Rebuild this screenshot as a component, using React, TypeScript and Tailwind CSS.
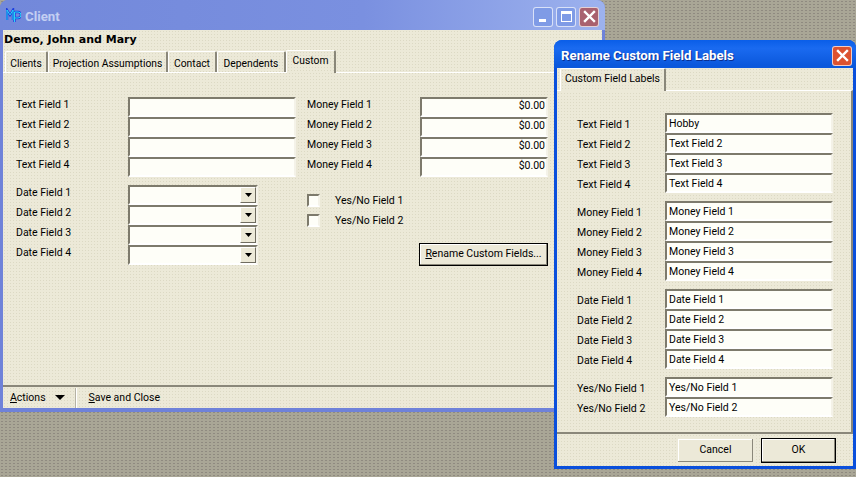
import React from "react";

const inset = "border-2 border-t-[#7d7a6c] border-l-[#7d7a6c] border-b-white border-r-[#f4f2e8] bg-[#fefef8]";
const panel = "bg-[#ece9d8] bg-[radial-gradient(#dcd9c4_0.7px,transparent_0.8px)] bg-[size:3px_3px]";

function Field({ value = "", right = false, w, up = "" }: { value?: string; right?: boolean; w: string; up?: string }) {
  return (
    <div className={`h-5 ${w} ${inset} flex items-center overflow-hidden whitespace-nowrap leading-none ${right ? "justify-end pr-[1px]" : "pl-[2px]"}`}>
      <span className={up}>{value}</span>
    </div>
  );
}

function Row({ label, labelW, shift, children }: { label: string; labelW: string; shift: string; children: React.ReactNode }) {
  return (
    <div className="flex h-5 items-center">
      <div className={`${labelW} shrink-0 whitespace-nowrap ${shift}`}>{label}</div>
      {children}
    </div>
  );
}

function DateBox() {
  return (
    <div className={`h-5 w-[130px] ${inset} flex justify-end`}>
      <div className="w-[16px] h-4 bg-[#ece9d8] border border-t-white border-l-white border-b-[#6f6c60] border-r-[#6f6c60] flex items-center justify-center">
        <svg width="7" height="4" viewBox="0 0 7 4"><path d="M0 0h7L3.500 4z" fill="#000" /></svg>
      </div>
    </div>
  );
}

function Tab({ label, active = false, w, text }: { label: string; active?: boolean; w: string; text: string }) {
  return (
    <div
      className={`${w} shrink-0 whitespace-nowrap flex items-center justify-center ${panel} border-t border-l border-t-white border-l-white border-r-2 border-r-[#8a877a] rounded-t-[2px] ${
        active ? "h-[23px] -mb-[1px] relative z-10" : "h-[21px]"
      }`}
    >
      <span className={`${text} ${active ? "-mt-[2px]" : "mt-[4px]"}`}>{label}</span>
    </div>
  );
}

function Mp() {
  return (
    <svg width="15" height="16" viewBox="0 0 15 16" className="mr-[4px] mt-[1px]">
      <path d="M1 12V2l3 5 3-5v10M8.500 14V4h3.500a2.500 2.500 0 0 1 0 6H8.500" fill="none" stroke="#1c3fe0" strokeWidth="2.400" />
      <path d="M1 12V2l3 5 3-5v10M8.500 14V4h3.500a2.500 2.500 0 0 1 0 6H8.500" fill="none" stroke="#27d7f5" strokeWidth="1" />
    </svg>
  );
}

function WinBtn({ children, cls }: { children: React.ReactNode; cls: string }) {
  return (
    <div className={`w-[20px] h-[20px] rounded-[3px] border border-white/70 flex items-center justify-center ${cls}`}>
      {children}
    </div>
  );
}

function XIcon() {
  return (
    <svg width="13" height="13" viewBox="0 0 13 13">
      <path d="M2 2l9 9M11 2l-9 9" stroke="#fff" strokeWidth="2.400" strokeLinecap="square" />
    </svg>
  );
}

const n4 = [1, 2, 3, 4];

function ClientWindow() {
  return (
    <div className="absolute left-0 top-0 w-[605px] h-[412px] flex flex-col rounded-t-[8px] bg-[#6f82d9] px-[3px] pb-[4px]">
      <div className="h-[30px] shrink-0 -mx-[3px] pl-[6px] pr-[6px] flex items-center rounded-t-[8px] bg-[linear-gradient(90deg,#7288da,#7a90e0_60%,#9db2ee)]">
        <Mp />
        <span className="text-[13.250px] font-bold text-[#c3cff2] mt-[3px]">Client</span>
        <div className="ml-auto flex gap-[3px] mt-[3px]">
          <WinBtn cls="bg-[#7f9be6]"><div className="w-[7px] h-[3px] bg-white mt-[8px] -ml-[2px]" /></WinBtn>
          <WinBtn cls="bg-[#7f9be6]"><div className="w-[11px] h-[11px] border border-white border-t-[3px]" /></WinBtn>
          <WinBtn cls="bg-[#a9616f]"><XIcon /></WinBtn>
        </div>
      </div>
      <div className={`flex-1 min-h-0 flex flex-col ${panel}`}>
        <div className="h-5 shrink-0 flex items-center pl-[1px] text-[11px] font-bold text-black [font-family:'DejaVu_Sans',sans-serif]">
          <span className="-mt-[2px]">Demo, John and Mary</span>
        </div>
        <div className="h-[22px] shrink-0 flex items-end pl-[2px]">
          <Tab label="Clients" w="w-[43px]" text="text-[10.300px]" />
          <Tab label="Projection Assumptions" w="w-[120px]" text="text-[10.300px]" />
          <Tab label="Contact" w="w-[49px]" text="text-[10.300px]" />
          <Tab label="Dependents" w="w-[69px]" text="text-[10.300px]" />
          <Tab label="Custom" w="w-[50px]" text="text-[10.300px]" active />
        </div>
        <div className="flex-1 min-h-0 border-t border-t-white flex pl-[13px] pt-[24px]">
          <div className="w-[293px] shrink-0">
            {n4.map((i) => (
              <Row key={i} label={`Text Field ${i}`} labelW="w-[112px]" shift="-mt-[3px]"><Field w="w-[168px]" /></Row>
            ))}
            <div className="h-2" />
            {n4.map((i) => (
              <Row key={i} label={`Date Field ${i}`} labelW="w-[112px]" shift="-mt-[3px]"><DateBox /></Row>
            ))}
          </div>
          <div className="w-[241px] shrink-0 -ml-[2px]">
            {n4.map((i) => (
              <Row key={i} label={`Money Field ${i}`} labelW="w-[113px]" shift="-mt-[3px]"><Field w="w-[128px]" value="$0.00" right up="-mt-[2px]" /></Row>
            ))}
            <div className="h-[13px]" />
            {[1, 2].map((i) => (
              <div key={i} className="flex h-5 items-center">
                <div className={`w-[13px] h-[13px] mr-[15px] ${inset}`} />
                <span className="mt-[2px] whitespace-nowrap">{`Yes/No Field ${i}`}</span>
              </div>
            ))}
            <div className="mt-[13px] ml-[112px] w-[129px] h-[23px] border border-black bg-[#ece9d8] shadow-[inset_-1px_-1px_0_#8a877a,inset_1px_1px_0_#fff] flex items-center justify-center whitespace-nowrap">
              <span className="-mt-[1px]"><u>R</u>ename Custom Fields...</span>
            </div>
          </div>
        </div>
        <div className="h-[23px] shrink-0 border-t-2 border-t-[#8a877a] flex items-center pl-[7px]">
          <span className="mt-[2px]"><u>A</u>ctions</span>
          <svg width="10" height="5" viewBox="0 0 10 5" className="ml-[9px] mr-[10px]"><path d="M0 0h10L5 5z" fill="#000" /></svg>
          <div className="w-[2px] h-[20px] border-l border-r border-l-[#b5b2a4] border-r-white mr-[12px]" />
          <span className="mt-[2px]"><u>S</u>ave and Close</span>
        </div>
      </div>
    </div>
  );
}

function DialogGroup({ name, items, first }: { name: string; items: number[]; first?: string }) {
  return (
    <div>
      {items.map((i) => (
        <Row key={i} label={`${name} ${i}`} labelW="w-[88px]" shift="mt-[4px]">
          <Field w="w-[168px]" value={i === 1 && first ? first : `${name} ${i}`} up="mt-[2px]" />
        </Row>
      ))}
    </div>
  );
}

function RenameDialog() {
  return (
    <div className="absolute left-[554px] top-[40px] w-[302px] h-[429px] flex flex-col rounded-t-[8px] bg-[#0a4fdc] px-[3px] pb-[3px]">
      <div className="h-[28px] shrink-0 -mx-[3px] pl-[7px] pr-[4px] flex items-center rounded-t-[8px] bg-[linear-gradient(180deg,#0a5ee8,#1a6af0_30%,#0b58dc_90%)]">
        <span className="text-[13.250px] font-bold text-white [text-shadow:1px_1px_0_#0a2f90] mt-[3px] whitespace-nowrap">Rename Custom Field Labels</span>
        <div className="ml-auto mt-[3px]">
          <WinBtn cls="bg-[#dc5230]"><XIcon /></WinBtn>
        </div>
      </div>
      <div className={`flex-1 min-h-0 flex flex-col ${panel}`}>
        <div className="h-[22px] shrink-0 flex items-end pl-[3px]">
          <Tab label="Custom Field Labels" w="w-[106px]" text="text-[10.500px]" active />
        </div>
        <div className="flex-1 min-h-0 border-t border-t-white border-r-2 border-r-[#8a877a] pt-[22px] pl-[20px] flex flex-col gap-2">
          <DialogGroup name="Text Field" items={n4} first="Hobby" />
          <DialogGroup name="Money Field" items={n4} />
          <DialogGroup name="Date Field" items={n4} />
          <DialogGroup name="Yes/No Field" items={[1, 2]} />
        </div>
        <div className="h-[34px] shrink-0 border-t-2 border-t-[#8a877a] flex items-start justify-end pt-[4px] pr-[17px] gap-[7px]">
          <div className="w-[77px] h-[25px] border border-[#ece9d8] bg-[#ece9d8] shadow-[inset_-1px_-1px_0_#8a877a,inset_1px_1px_0_#fff] flex items-center justify-center">Cancel</div>
          <div className="w-[75px] h-[25px] border border-black bg-[#ece9d8] shadow-[inset_-1px_-1px_0_#8a877a,inset_1px_1px_0_#fff] flex items-center justify-center">OK</div>
        </div>
      </div>
    </div>
  );
}

export default function App() {
  return (
    <div className="relative w-[856px] h-[477px] overflow-hidden bg-[#a9a696] bg-[radial-gradient(#8f8a80_0.7px,transparent_0.8px)] bg-[size:4px_3px] text-[10.500px] leading-none text-black [font-family:Roboto,Arial,sans-serif]">
      <ClientWindow />
      <RenameDialog />
    </div>
  );
}
